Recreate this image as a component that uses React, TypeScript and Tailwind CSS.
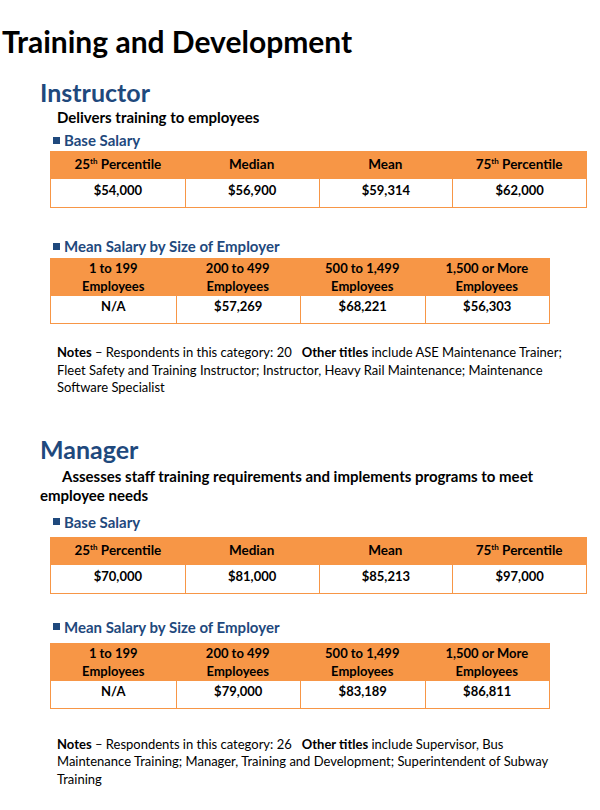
import React from 'react';

type Job = {
  title: string;
  description: string;
  base: string[];
  bySize: string[];
  respondents: number;
  otherTitles: string;
};

const jobs: Job[] = [
  {
    title: 'Instructor',
    description: 'Delivers training to employees',
    base: ['$54,000', '$56,900', '$59,314', '$62,000'],
    bySize: ['N/A', '$57,269', '$68,221', '$56,303'],
    respondents: 20,
    otherTitles:
      'include ASE Maintenance Trainer; Fleet Safety and Training Instructor; Instructor, Heavy Rail Maintenance; Maintenance Software Specialist',
  },
  {
    title: 'Manager',
    description: 'Assesses staff training requirements and implements programs to meet employee needs',
    base: ['$70,000', '$81,000', '$85,213', '$97,000'],
    bySize: ['N/A', '$79,000', '$83,189', '$86,811'],
    respondents: 26,
    otherTitles:
      'include Supervisor, Bus Maintenance Training; Manager, Training and Development; Superintendent of Subway Training',
  },
];

const sizes = [
  ['1 to 199', 'Employees'],
  ['200 to 499', 'Employees'],
  ['500 to 1,499', 'Employees'],
  ['1,500 or More', 'Employees'],
];

function SubHeading({ children }: { children: React.ReactNode }) {
  return (
    <div className="flex items-center gap-[4px] text-[15px] font-bold leading-[16px] text-[#1f497d]">
      <span className="inline-block w-[7px] h-[7px] bg-[#1f497d]" />
      {children}
    </div>
  );
}

function Pct({ n }: { n: string }) {
  return (
    <span>
      {n}
      <span className="text-[8px] align-top relative top-[1px]">th</span> Percentile
    </span>
  );
}

function BaseTable({ values }: { values: string[] }) {
  return (
    <div className="w-[537px] border border-[#f79646] font-bold text-black">
      <div className="grid grid-cols-4 h-[27px] bg-[#f79646] items-start pt-[2px] text-center text-[13.5px]">
        <Pct n="25" />
        <span>Median</span>
        <span>Mean</span>
        <Pct n="75" />
      </div>
      <div className="grid grid-cols-4 h-[28px] text-center text-[13px]">
        {values.map((v, i) => (
          <div key={i} className={`pt-[2px] ${i > 0 ? 'border-l border-[#f79646]' : ''}`}>
            {v}
          </div>
        ))}
      </div>
    </div>
  );
}

function SizeTable({ values }: { values: string[] }) {
  return (
    <div className="w-[500px] border border-[#f79646] text-[13px] font-bold text-black">
      <div className="grid grid-cols-4 h-[37px] bg-[#f79646] text-center leading-[18px]">
        {sizes.map((s, i) => (
          <div key={i}>
            <div>{s[0]}</div>
            <div>{s[1]}</div>
          </div>
        ))}
      </div>
      <div className="grid grid-cols-4 h-[27px] text-center">
        {values.map((v, i) => (
          <div key={i} className={`pt-[1px] ${i > 0 ? 'border-l border-[#f79646]' : ''}`}>
            {v}
          </div>
        ))}
      </div>
    </div>
  );
}

function JobSection({ job, first }: { job: Job; first: boolean }) {
  return (
    <section className={`pl-[40px] ${first ? 'mt-[19px]' : 'mt-[37px]'}`}>
      <h2 className="text-[25px] font-bold leading-[30px] text-[#1f497d]">{job.title}</h2>
      {first ? (
        <p className="pl-[17px] text-[15px] font-bold leading-[18px] mt-[1px]">{job.description}</p>
      ) : (
        <p className="pr-[62px] indent-[22px] text-[15px] font-bold leading-[19px] mt-[3px]">
          {job.description}
        </p>
      )}
      <div className={`pl-[13px] ${first ? 'mt-[6px]' : 'mt-[9px]'}`}>
        <SubHeading>Base Salary</SubHeading>
      </div>
      <div className={`pl-[10px] ${first ? 'mt-[3px]' : 'mt-[7px]'}`}>
        <BaseTable values={job.base} />
      </div>
      <div className={`pl-[13px] ${first ? 'mt-[30px]' : 'mt-[25px]'}`}>
        <SubHeading>Mean Salary by Size of Employer</SubHeading>
      </div>
      <div className={`pl-[10px] ${first ? 'mt-[4px]' : 'mt-[8px]'}`}>
        <SizeTable values={job.bySize} />
      </div>
      <p
        className={`pl-[17px] pr-[30px] text-[13px] leading-[17.5px] text-black ${
          first ? 'mt-[20px]' : 'mt-[27px]'
        }`}
      >
        <b>Notes</b> – Respondents in this category: {job.respondents}{'\u00a0\u00a0 '}
        <b>Other titles</b> {job.otherTitles}
      </p>
    </section>
  );
}

export default function App() {
  return (
    <div className="w-[600px] h-[810px] bg-white text-black font-['Lato',sans-serif] overflow-hidden">
      <h1 className="pl-[2px] pt-[24px] text-[30px] font-bold leading-[34px]">Training and Development</h1>
      {jobs.map((job, i) => (
        <JobSection key={job.title} job={job} first={i === 0} />
      ))}
    </div>
  );
}
